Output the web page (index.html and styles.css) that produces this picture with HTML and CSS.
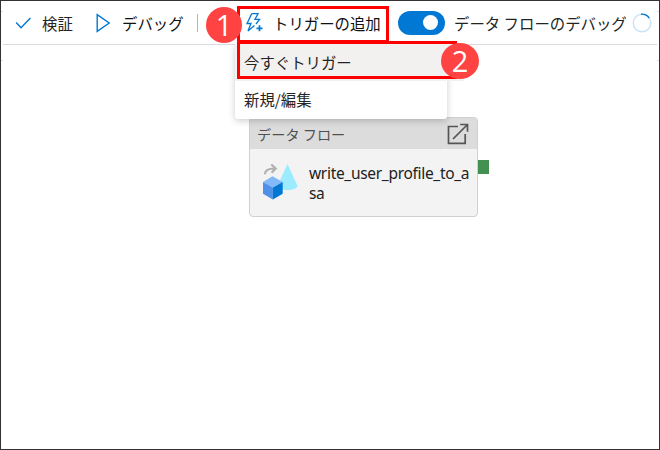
FILE: index.html
```
<!DOCTYPE html>
<html lang="ja">
<head>
<meta charset="utf-8">
<title>データ フロー</title>
<link rel="stylesheet" href="styles.css">
</head>
<body>
<div class="window">
  <header class="toolbar">
    <svg class="check" width="17" height="14" viewBox="0 0 17 14"><path d="M1.2 6.5 6 11.7 15.5 2"/></svg>
    <span class="label validate">検証</span>
    <svg class="play" width="15" height="20" viewBox="0 0 15 20"><path d="M1.2 1.7V18.3L13.2 10Z"/></svg>
    <span class="label debug">デバッグ</span>
    <span class="divider"></span>
    <button class="trigger">
      <svg width="19" height="21" viewBox="0 0 19 21"><path d="M6.7 1.7H13L10 7.3H14.6L11 12M6.7 1.7 2 11.5H6L3 19 9.5 13.5"/><path class="plus" d="M14.5 13.3V19.3M11.5 16.3H17.5"/></svg>
      <span class="label">トリガーの追加</span>
    </button>
    <span class="toggle"><span class="knob"></span></span>
    <span class="label flow-debug">データ フローのデバッグ</span>
    <svg class="spinner" width="20" height="20" viewBox="0 0 20 20"><circle cx="10" cy="10" r="8.8"/><path d="M9 1.2A8.8 8.8 0 0 1 17.2 5"/></svg>
  </header>
  <main class="canvas">
    <i class="tick left top"></i><i class="tick right top"></i>
    <i class="tick left"></i><i class="tick right"></i>
    <article class="node">
      <div class="node-head"><span>データ フロー</span>
        <svg width="22" height="22" viewBox="0 0 22 22"><path d="M11 3.5H1.5V20.3H18.2V11M6 16 20 2M13.2 1.5H20.5V8.8"/></svg>
      </div>
      <div class="node-body">
        <svg width="36" height="38" viewBox="0 0 36 38">
          <path fill="#9cebff" d="M25.5 1 35.4 22.5C35.6 28.5 15.5 28.5 15.7 22.5Z"/>
          <path fill="none" stroke="#b0b0b0" stroke-width="2.2" d="M2.8 11.3C3 6.5 7 5.4 12.8 5.5M9.3 1.5 13.7 5.5 9.6 9.8"/>
          <path fill="#83b9f9" d="M10.5 13.3 20.7 18.9 10.9 24.4 1 19Z"/>
          <path fill="#5090e8" d="M1 19 10.9 24.4V36.5L1 30.8Z"/>
          <path fill="#0078d4" d="M20.7 18.9V30.7L10.9 36.5V24.4Z"/>
        </svg>
        <p>write_user_profile_to_a<br>sa</p>
      </div>
      <i class="port"></i>
    </article>
  </main>
  <nav class="menu">
    <div class="item active">今すぐトリガー</div>
    <div class="item">新規/編集</div>
  </nav>
  <div class="mark mark-trigger"></div>
  <div class="mark mark-now"></div>
  <span class="badge one">1</span>
  <span class="badge two">2</span>
</div>
</body>
</html>
```
FILE: styles.css
```
* { box-sizing: border-box; }
body { margin: 0; font-family: "Noto Sans CJK JP", sans-serif; color: #242424; }
.window { position: relative; width: 660px; height: 450px; border: 1px solid #333; background: #fff; overflow: hidden; }
svg { display: block; flex: none; fill: none; stroke-width: 1.4; }
.toolbar { display: flex; align-items: center; height: 44px; margin: 0 2px; padding-left: 12px; border-bottom: 1px solid #dcdcdc; stroke: #0078d4; }
.label { font-size: 15.4px; line-height: 24px; white-space: nowrap; stroke: none; }
.validate { width: 31px; margin-left: 10px; }
.play { margin-left: 23px; }
.debug { margin-left: 11px; width: 61px; color: #111; }
.divider { width: 1px; height: 18px; margin-left: 14px; background: #b5b5b5; }
.trigger { display: flex; align-items: center; gap: 9px; width: 136px; margin-left: 47px; padding: 0; border: 0; background: none; font: inherit; color: #111; stroke: #0078d4; }
.trigger svg { stroke-width: 1.3; }
.trigger .plus { stroke-width: 1.7; }
.toggle { flex: none; display: flex; justify-content: flex-end; align-items: center; width: 47px; height: 24px; margin-left: 17px; padding-right: 7px; border-radius: 12px; background: #0078d4; }
.knob { width: 15px; height: 15px; border-radius: 50%; background: #fff; }
.flow-debug { margin-left: 9px; width: 174px; }
.spinner { margin-left: 4px; }
.spinner circle { stroke: #c9e2f7; }
.canvas { position: relative; height: 404px; }
.tick { position: absolute; top: 15px; width: 2px; height: 1px; background: #ddd; }
.tick.top { top: -34px; }
.left { left: 0; }
.right { right: 0; }
.node { position: absolute; left: 248px; top: 72px; width: 229px; height: 100px; padding: 1px; border: 1px solid #d0d0d0; border-radius: 4px; background: #f3f3f3; }
.node-head { display: flex; justify-content: space-between; height: 31px; margin: -1px -1px 0; padding: 4px 8px 0 7px; background: #dcdcdc; color: #505050; font-size: 14.2px; line-height: 24px; }
.node-head svg { margin-top: 1px; stroke: #555; stroke-width: 1.7; }
.node-body { display: flex; padding: 14px 0 0 11px; }
.node-body p { margin: 0 0 0 11px; color: #222; font: 15.5px/20px "Noto Sans", sans-serif; letter-spacing: -.31px; white-space: nowrap; }
.port { position: absolute; left: 228px; top: 42px; width: 11px; height: 14px; background: #439150; }
.menu { position: absolute; left: 234px; top: 43px; width: 212px; height: 75px; background: #fff; border-radius: 0 0 3px 3px; box-shadow: 0 2px 7px #0003; }
.item { height: 38px; padding-left: 9px; font-size: 15.4px; line-height: 37px; }
.item.active { width: 229px; height: 37px; background: #f3f1f0; }
.mark { position: absolute; border: 3px solid #f00; }
.mark-trigger { left: 236px; top: 5px; width: 152px; height: 37px; }
.mark-now { left: 236px; top: 40px; width: 220px; height: 38px; border-right: 0; }
.badge { position: absolute; display: flex; align-items: center; justify-content: center; width: 36px; height: 36px; border-radius: 50%; background: #ff4343; color: #fff; font: 29px/36px "Open Sans", sans-serif; }
.one { left: 205px; top: 6px; }
.two { left: 440px; top: 42px; width: 38px; }
```
